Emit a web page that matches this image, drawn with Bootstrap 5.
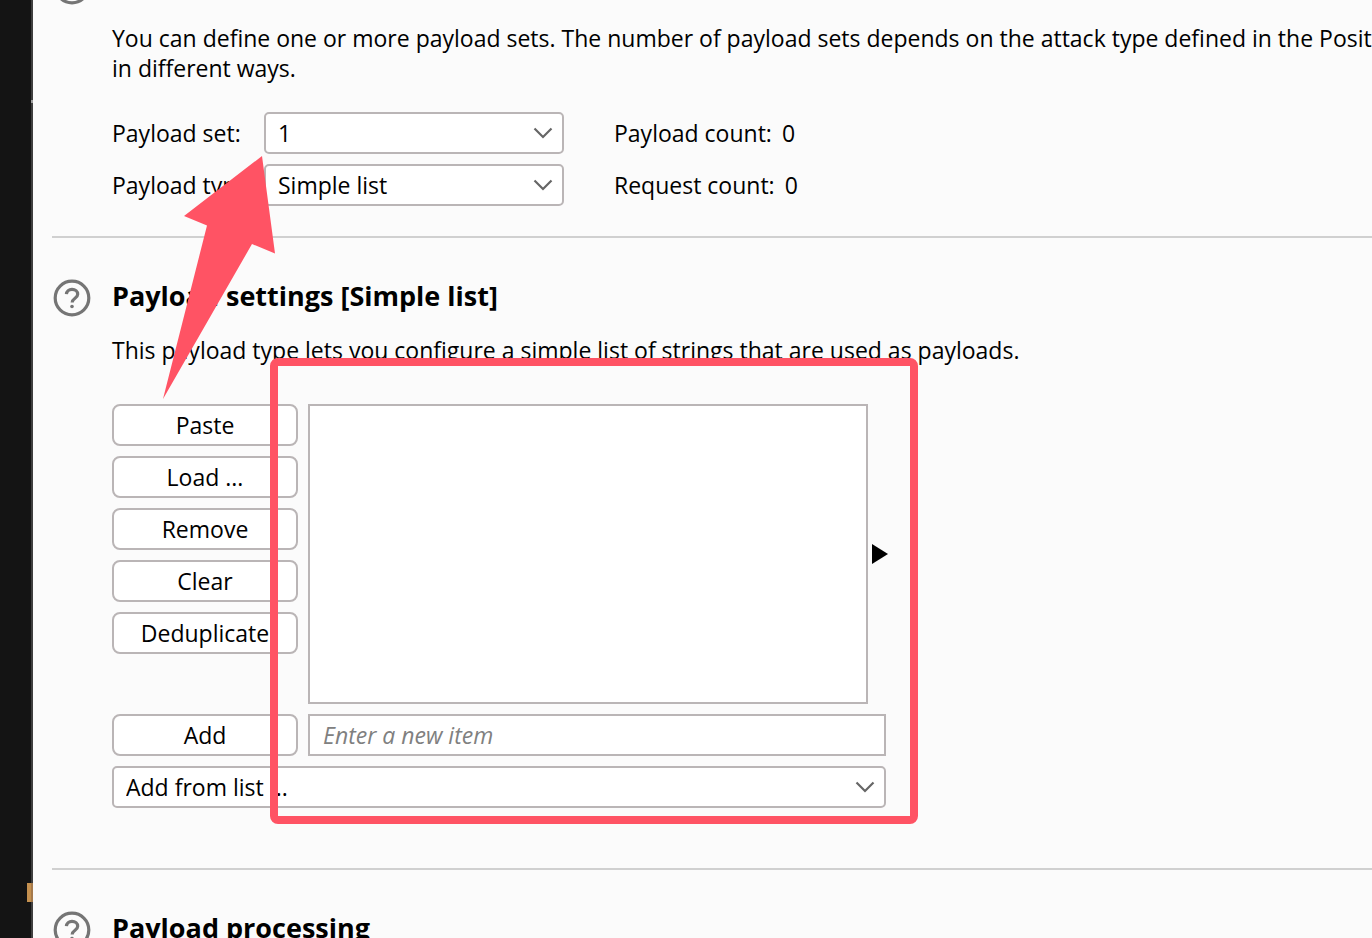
<!DOCTYPE html>
<html lang="en">
<head>
<meta charset="utf-8">
<meta name="viewport" content="width=device-width, initial-scale=1">
<title>Payloads</title>
<link href="https://cdn.jsdelivr.net/npm/bootstrap@5.3.0/dist/css/bootstrap.min.css" rel="stylesheet">
<style>
  :root { --line: #bab5b6; --mark-red: #ff5364; }
  body { font: 23px/30px "Open Sans", "Noto Sans", sans-serif; color: #000; background: #fbfbfb; }
  .edge-strip { width: 33px; background: #141414; border-right: 2px solid #3f3f3f; }
  .edge-tab { right: -2px; bottom: 36px; width: 6px; height: 19px; background: linear-gradient(90deg, #c4904f 4px, #a5794b 4px); }
  .edge-dot { right: -2px; top: 100px; width: 2px; height: 3px; background: #a0a0a0; }
  .panel { min-width: 0; padding-left: 19px; }
  .pane-section { padding-top: 42px; border-bottom: 2px solid #d0d0d0; }
  .pane-section:first-child { margin-top: -74px; padding-bottom: 30px; }
  .pane-section:last-child { border-bottom: 0; }
  .settings { padding-bottom: 60px; }
  .section-head { gap: 22px; height: 36px; padding-left: 2px; }
  .section-head h2 { font-size: 27px; line-height: 32px; font-weight: 700; margin: 0; }
  .section-body { padding-left: 60px; padding-top: 19px; }
  .set-grid { display: grid; grid-template-columns: 152px 300px auto; row-gap: 10px; padding-top: 29px; align-items: center; justify-content: start; }
  .count { padding-left: 50px; gap: 10px; }
  .form-select, .form-control, .btn-tool { height: 42px; border: 2px solid var(--line); font-size: 23px; line-height: 30px; color: #000; background-color: #fff; }
  .form-select { border-radius: 5px; padding: 4px 40px 4px 12px; background-position: right 9px center; background-size: 20px 12px;
    background-image: url("data:image/svg+xml,%3Csvg xmlns='http://www.w3.org/2000/svg' viewBox='0 0 20 12'%3E%3Cpath d='M1.500 1.500 10 10l8.500-8.500' fill='none' stroke='%23666' stroke-width='2.200'/%3E%3C/svg%3E"); }
  .form-control { border-radius: 0; padding: 4px 13px; }
  .form-control::placeholder { color: #808080; font-style: italic; }
  .btn-tool { border-radius: 8px; padding: 4px 0; }
  .tool-stack { gap: 10px; }
  .editor { display: grid; grid-template-columns: 186px 560px 8px; gap: 10px; padding-top: 39px; }
  .item-list { height: 300px; resize: none; }
  .expander { width: 16px; margin-left: -6px; padding: 0; border: 0; background: none; line-height: 0; }
  .span-two { grid-column: 2 / 4; }
  .span-all { grid-column: 1 / 4; }
  .callout-frame { left: 218px; top: 120px; width: 648px; height: 466px; border: 8px solid var(--mark-red); border-radius: 8px; pointer-events: none; }
  .callout-arrow { left: 110px; top: -82px; pointer-events: none; }
</style>
</head>
<body>
<svg class="d-none" aria-hidden="true">
  <symbol id="help" viewBox="0 0 36 36" overflow="visible">
    <circle cx="18" cy="18" r="16.800" fill="none" stroke="#757575" stroke-width="3.200"/>
    <path d="M12.400 14.200c.2-3 2.600-4.900 5.600-4.900 3.200 0 5.700 2 5.700 4.900 0 4.100-5.500 3.900-5.500 8.300" fill="none" stroke="#757575" stroke-width="3.200"/>
    <circle cx="18" cy="26.500" r="1.800" fill="#757575"/>
  </symbol>
</svg>
<div class="d-flex vh-100 overflow-hidden">
  <aside class="edge-strip position-relative flex-shrink-0">
    <span class="edge-dot position-absolute"></span>
    <span class="edge-tab position-absolute"></span>
  </aside>
  <main class="panel flex-grow-1 overflow-hidden">
    <section class="pane-section">
      <div class="section-head d-flex"><svg width="36" height="36" overflow="visible"><use href="#help"/></svg></div>
      <div class="section-body">
        <p class="mb-0 text-nowrap">You can define one or more payload sets. The number of payload sets depends on the attack type defined in the Positions<br>in different ways.</p>
        <div class="set-grid">
          <label for="pset">Payload set:</label>
          <select id="pset" class="form-select"><option>1</option></select>
          <div class="count d-flex"><span>Payload count:</span><span>0</span></div>
          <label for="ptype">Payload type:</label>
          <select id="ptype" class="form-select"><option>Simple list</option></select>
          <div class="count d-flex"><span>Request count:</span><span>0</span></div>
        </div>
      </div>
    </section>
    <section class="pane-section settings position-relative">
      <div class="section-head d-flex"><svg width="36" height="36" overflow="visible"><use href="#help"/></svg><h2>Payload settings [Simple list]</h2></div>
      <div class="section-body">
        <p class="mb-0 text-nowrap">This payload type lets you configure a simple list of strings that are used as payloads.</p>
        <div class="editor">
          <div class="d-flex flex-column tool-stack">
            <button type="button" class="btn btn-tool">Paste</button>
            <button type="button" class="btn btn-tool">Load ...</button>
            <button type="button" class="btn btn-tool">Remove</button>
            <button type="button" class="btn btn-tool">Clear</button>
            <button type="button" class="btn btn-tool">Deduplicate</button>
          </div>
          <textarea class="form-control item-list" aria-label="Payload items"></textarea>
          <button type="button" class="expander" aria-label="Expand"><svg width="16" height="20"><path d="M0 0 16 10 0 20z"/></svg></button>
          <button type="button" class="btn btn-tool">Add</button>
          <input type="text" class="form-control span-two" placeholder="Enter a new item" aria-label="New item">
          <select class="form-select span-all" aria-label="Add from list"><option>Add from list ...</option></select>
        </div>
      </div>
      <div class="callout-frame position-absolute"></div>
      <svg class="callout-arrow position-absolute" width="113" height="244" viewBox="0 0 113 244" aria-hidden="true"><path d="M100 0 22 60 45 69.500 1 243 90 88l23 9.500z" fill="#ff5364"/></svg>
    </section>
    <section class="pane-section">
      <div class="section-head d-flex"><svg width="36" height="36" overflow="visible"><use href="#help"/></svg><h2>Payload processing</h2></div>
    </section>
  </main>
</div>
<script src="https://cdn.jsdelivr.net/npm/bootstrap@5.3.0/dist/js/bootstrap.bundle.min.js"></script>
</body>
</html>
